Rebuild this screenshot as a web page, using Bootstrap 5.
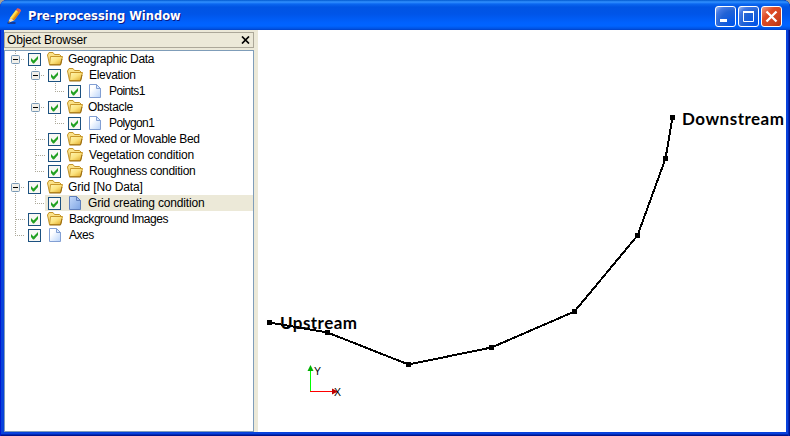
<!DOCTYPE html>
<html lang="en">
<head>
<meta charset="utf-8">
<title>Pre-processing Window</title>
<link href="https://cdn.jsdelivr.net/npm/bootstrap@5.3.0/dist/css/bootstrap.min.css" rel="stylesheet">
<style>
html,body{height:436px;overflow:hidden}
body{background:#a5a296;font:12px/16px "Liberation Sans",sans-serif;color:#000}
.win{width:790px;height:436px;padding:0 4px 4px;border-radius:7px 7px 0 0;overflow:hidden;background:#0842dc;box-shadow:inset 1px 0 #0019cf,inset -1px 0 #00138c,inset -2px 0 #0029b4,inset 0 -1px #00138c,inset 0 -2px #0029b4}
.titlebar{height:30px;margin:0 -4px;padding:2px 8px 0 6px;background:linear-gradient(#0058ce 0,#3291ff 2px,#0a67f0 4px,#0054e3 7px,#0055e8 14px,#0062ff 23px,#0064ff 26px,#0050df 29px,#003fc4 30px)}
.caption-text{font:bold 11.500px/16px "DejaVu Sans","Liberation Sans",sans-serif;color:#fff;text-shadow:1px 1px #0a1883;margin-left:6px}
.tb{width:21px;height:21px;border:1px solid #fff;border-radius:3px;padding:0;line-height:0;background:radial-gradient(circle at 90% 90%,#0054e9 0,#2263d5 55%,#4479e4 79%,#a3bbec 100%)}
.tb-close{background:linear-gradient(135deg,#ef9880,#df4b25 35%,#cf4420 70%,#b93210)}
.dock{width:254px;background:#ece9d8;padding:2px 4px 0 0}
.dockhead{height:16px;border:1px solid #aca899;padding:0 3px 0 2px;line-height:14px}
.tree{height:382px;margin-top:2px;border:1px solid #7f9db9;background:#fff}
.trow{height:16px}
.ind{width:20px;height:16px;flex:none;display:block;fill:none}
.pick{padding-left:3px;height:16px}
.on{background:#ece9d8}
.chk{width:13px;height:13px;flex:none}
.ico{width:16px;height:16px;flex:none;margin:0 5px 0 6px}
.lbl{white-space:nowrap;line-height:16px}
.k1{letter-spacing:-.15px}.k2{letter-spacing:-.3px}.k3{letter-spacing:-.45px}.k4{letter-spacing:-.6px}
.in1{margin-left:1px}
</style>
</head>
<body>
<svg width="0" height="0" class="position-absolute">
<defs>
<linearGradient id="gf" x1="0" y1="0" x2="1" y2="1"><stop offset="0" stop-color="#fff6b8"/><stop offset=".5" stop-color="#fbe27c"/><stop offset="1" stop-color="#dda526"/></linearGradient>
<linearGradient id="gp" x1="0" y1="0" x2="1" y2="1"><stop offset=".3" stop-color="#fff"/><stop offset="1" stop-color="#b9d4fa"/></linearGradient>
<linearGradient id="gs" x1="0" y1="0" x2="1" y2="1"><stop offset="0" stop-color="#c4d9fa"/><stop offset="1" stop-color="#7ea5e4"/></linearGradient>
</defs>
<symbol id="v" viewBox="0 0 20 16"><path d="M10.5 0V16" stroke="#aca899" stroke-dasharray="1 1"/></symbol>
<symbol id="t" viewBox="0 0 20 16"><path d="M10.5 0V16M11 8.500H23" stroke="#aca899" stroke-dasharray="1 1"/></symbol>
<symbol id="l" viewBox="0 0 20 16"><path d="M10.500 0V8M10 8.500H23" stroke="#aca899" stroke-dasharray="1 1"/></symbol>
<symbol id="e" viewBox="0 0 20 16"><path d="M10.500 0V16M16 8.500H20" stroke="#aca899" stroke-dasharray="1 1"/><rect x="6.500" y="4.500" width="8" height="8" rx="1" fill="#f2f0ea" stroke="#7898b5"/><path d="M8 8.500h5" stroke="#000"/></symbol>
<symbol id="c" viewBox="0 0 13 13"><rect x=".5" y=".5" width="12" height="12" fill="#f7f7f4" stroke="#1c5180"/><path d="M3 5v3l2 2.500h1L10 6V3L5.500 7.500z" fill="#21a121"/></symbol>
<symbol id="f" viewBox="0 0 16 16"><path d="M.5 4L2 1.500h4L7.500 3.500H12.500L14 5v7l-1 1.500H2.500z" fill="#fbe288" stroke="#c4952a"/><path d="M3.500 5.500H15.500L13.500 13.500H2.500z" fill="url(#gf)" stroke="#c9972a"/><path d="M2.500 14h11l1.500-6" fill="none" stroke="#9a6d10"/></symbol>
<symbol id="p" viewBox="0 0 16 16"><path d="M2.500 1.500h7l4 4v9h-11z" fill="url(#gp)" stroke="#829fd3"/><path d="M9.500 1.500v4h4z" fill="#dceafe" stroke="#829fd3"/></symbol>
<symbol id="s" viewBox="0 0 16 16"><path d="M2.500 1.500h7l4 4v9h-11z" fill="url(#gs)" stroke="#6080bd"/><path d="M9.500 1.500v4h4z" fill="#a8c4f3" stroke="#6080bd"/></symbol>
</svg>
<div class="win d-flex flex-column">
<header class="titlebar d-flex align-items-center flex-shrink-0">
<svg width="16" height="16" viewBox="0 0 16 16"><path d="M1.500 15h8" stroke="#12399a" stroke-width="2"/><path d="M4 10L10 2l4 2.500-6 8z" fill="#f5b820"/><path d="M4 10l6-8 1.500 1-6 8z" fill="#ffe25a"/><path d="M6.700 11.800l6-8L14 4.500l-6 8z" fill="#d97a10"/><path d="M10 2l1-1.500c1-.8 4.500 1 4 2.500l-1 1.500z" fill="#e86050"/><path d="M4 10l4 2.500L2 15z" fill="#f7dfb5"/><path d="M2.800 13l1 1L2 15z" fill="#222"/></svg>
<span class="caption-text">Pre-processing Window</span>
<div class="d-flex ms-auto" style="gap:2px">
<button class="tb" aria-label="Minimize"><svg width="19" height="19"><path d="M4 13.500h7" stroke="#fff" stroke-width="3"/></svg></button>
<button class="tb" aria-label="Maximize"><svg width="19" height="19"><path d="M4.500 4.500h10v10h-10zM4 5.500h11" fill="none" stroke="#fff"/><path d="M4 5h11" stroke="#fff" stroke-width="2"/></svg></button>
<button class="tb tb-close" aria-label="Close"><svg width="19" height="19"><path d="M4.500 4.500l10 10m0-10l-10 10" stroke="#fff" stroke-width="2.300"/></svg></button>
</div>
</header>
<main class="d-flex flex-grow-1 bg-white">
<aside class="dock flex-shrink-0">
<div class="dockhead d-flex align-items-center justify-content-between"><span class="lbl k1">Object Browser</span><svg width="9" height="8"><path d="M1 .5l7 7m0-7l-7 7" stroke="#000" stroke-width="1.700"/></svg></div>
<div class="tree">
<div class="trow d-flex"><svg class="ind"><use href="#e"/></svg><div class="pick d-flex align-items-center flex-grow-1"><svg class="chk"><use href="#c"/></svg><svg class="ico"><use href="#f"/></svg><span class="lbl k2">Geographic Data</span></div></div>
<div class="trow d-flex"><svg class="ind"><use href="#v"/></svg><svg class="ind"><use href="#e"/></svg><div class="pick d-flex align-items-center flex-grow-1"><svg class="chk"><use href="#c"/></svg><svg class="ico"><use href="#f"/></svg><span class="lbl in1 k2">Elevation</span></div></div>
<div class="trow d-flex"><svg class="ind"><use href="#v"/></svg><svg class="ind"><use href="#v"/></svg><svg class="ind"><use href="#l"/></svg><div class="pick d-flex align-items-center flex-grow-1"><svg class="chk"><use href="#c"/></svg><svg class="ico"><use href="#p"/></svg><span class="lbl in1 k4">Points1</span></div></div>
<div class="trow d-flex"><svg class="ind"><use href="#v"/></svg><svg class="ind"><use href="#e"/></svg><div class="pick d-flex align-items-center flex-grow-1"><svg class="chk"><use href="#c"/></svg><svg class="ico"><use href="#f"/></svg><span class="lbl k2">Obstacle</span></div></div>
<div class="trow d-flex"><svg class="ind"><use href="#v"/></svg><svg class="ind"><use href="#v"/></svg><svg class="ind"><use href="#l"/></svg><div class="pick d-flex align-items-center flex-grow-1"><svg class="chk"><use href="#c"/></svg><svg class="ico"><use href="#p"/></svg><span class="lbl in1 k4">Polygon1</span></div></div>
<div class="trow d-flex"><svg class="ind"><use href="#v"/></svg><svg class="ind"><use href="#t"/></svg><div class="pick d-flex align-items-center flex-grow-1"><svg class="chk"><use href="#c"/></svg><svg class="ico"><use href="#f"/></svg><span class="lbl in1 k2">Fixed or Movable Bed</span></div></div>
<div class="trow d-flex"><svg class="ind"><use href="#v"/></svg><svg class="ind"><use href="#t"/></svg><div class="pick d-flex align-items-center flex-grow-1"><svg class="chk"><use href="#c"/></svg><svg class="ico"><use href="#f"/></svg><span class="lbl in1 k1">Vegetation condition</span></div></div>
<div class="trow d-flex"><svg class="ind"><use href="#v"/></svg><svg class="ind"><use href="#l"/></svg><div class="pick d-flex align-items-center flex-grow-1"><svg class="chk"><use href="#c"/></svg><svg class="ico"><use href="#f"/></svg><span class="lbl in1 k2">Roughness condition</span></div></div>
<div class="trow d-flex"><svg class="ind"><use href="#e"/></svg><div class="pick d-flex align-items-center flex-grow-1"><svg class="chk"><use href="#c"/></svg><svg class="ico"><use href="#f"/></svg><span class="lbl k1">Grid [No Data]</span></div></div>
<div class="trow d-flex"><svg class="ind"><use href="#v"/></svg><svg class="ind"><use href="#l"/></svg><div class="pick on d-flex align-items-center flex-grow-1"><svg class="chk"><use href="#c"/></svg><svg class="ico"><use href="#s"/></svg><span class="lbl k1">Grid creating condition</span></div></div>
<div class="trow d-flex"><svg class="ind"><use href="#t"/></svg><div class="pick d-flex align-items-center flex-grow-1"><svg class="chk"><use href="#c"/></svg><svg class="ico"><use href="#f"/></svg><span class="lbl in1 k3">Background Images</span></div></div>
<div class="trow d-flex"><svg class="ind"><use href="#l"/></svg><div class="pick d-flex align-items-center flex-grow-1"><svg class="chk"><use href="#c"/></svg><svg class="ico"><use href="#p"/></svg><span class="lbl in1 k3">Axes</span></div></div>
</div>
</aside>
<svg class="d-block flex-shrink-0" width="528" height="402" viewBox="258 30 528 402">
<path d="M269.500 322.500L327.500 332.500 408.500 364.500 491.500 347.500 574.500 311.500 637.500 235.500 665.500 158.500 672.500 117.500" fill="none" stroke="#000" stroke-width="2" shape-rendering="crispEdges"/>
<path d="M267 320h5v5h-5zM325 330h5v5h-5zM406 362h5v5h-5zM489 345h5v5h-5zM572 309h5v5h-5zM635 233h5v5h-5zM663 156h5v5h-5zM670 115h5v5h-5z"/>
<g font-family="Lato,sans-serif" font-weight="700" font-size="17"><text x="280" y="329" textLength="77">Upstream</text><text x="682" y="125" textLength="102">Downstream</text></g>
<path d="M310.500 392V370" stroke="#0f0"/><path d="M310 391.500H333" stroke="#f00"/>
<path d="M307.500 371l3-6 3 6z" fill="#00b000"/><path d="M332 388.500l6 3-6 3z" fill="#c00000"/>
<g font-family="Liberation Sans,sans-serif" font-size="10.500"><text x="314" y="375">Y</text><text x="334" y="396">X</text></g>
</svg>
</main>
</div>
<script src="https://cdn.jsdelivr.net/npm/bootstrap@5.3.0/dist/js/bootstrap.bundle.min.js"></script>
</body>
</html>
